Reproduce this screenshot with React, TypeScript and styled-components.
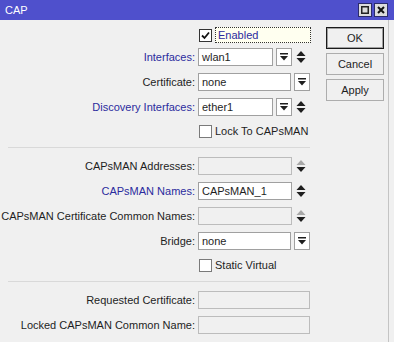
import React from 'react'
import styled, { createGlobalStyle } from 'styled-components'

const GlobalStyle = createGlobalStyle`
    html, body {
        margin: 0;
        padding: 0;
        background: #f0f0f0;
    }
    body {
        font-family: "Liberation Sans", Arial, sans-serif;
        font-size: 11px;
        color: #1e1e1e;
    }
`

const Window = styled.div`
    width: 394px;
    height: 342px;
    display: flex;
    flex-direction: column;
    background: #f0f0f0;
    overflow: hidden;
`

const TitleBar = styled.div`
    height: 20px;
    flex: none;
    display: flex;
    align-items: center;
    justify-content: space-between;
    background: #4f50cc;
    color: #ffffff;
    padding: 0 6px 0 5px;
    font-size: 11px;
`

const TitleButtons = styled.div`
    display: flex;
    gap: 2px;
`

const TitleButton = styled.div`
    width: 12px;
    height: 12px;
    border: 1px solid #2b2b6a;
    background: #dcdcdc;
    display: flex;
    align-items: center;
    justify-content: center;
`

const Body = styled.div`
    flex: 1;
    display: flex;
    align-items: flex-start;
    border-right: 1px solid #c4c4c4;
    margin-right: 5px;
`

const Form = styled.div`
    width: 310px;
    padding-top: 7px;
    display: flex;
    flex-direction: column;
`

const Section = styled.div`
    display: flex;
    flex-direction: column;
    gap: 7px;
`

const Separator = styled.div`
    height: 1px;
    background: #d9d9d9;
    margin: 8px 0 9px 8px;
`

const Row = styled.div<{ $height?: number }>`
    display: grid;
    grid-template-columns: 195px 112px;
    column-gap: 3px;
    align-items: center;
    height: ${({ $height }) => $height ?? 18}px;
`

const Label = styled.div<{ $link?: boolean }>`
    text-align: right;
    white-space: nowrap;
    color: ${({ $link }) => ($link ? '#2b2b9e' : '#1e1e1e')};
`

const Control = styled.div`
    display: flex;
    align-items: center;
    height: 18px;
`

const Input = styled.div<{ $disabled?: boolean }>`
    flex: 1;
    height: 18px;
    box-sizing: border-box;
    border: 1px solid ${({ $disabled }) => ($disabled ? '#bcbcbc' : '#a0a0a0')};
    background: ${({ $disabled }) => ($disabled ? '#f0f0f0' : '#ffffff')};
    padding: 0 3px;
    line-height: 16px;
    white-space: nowrap;
    overflow: hidden;
`

const DropButton = styled.div`
    width: 16px;
    height: 18px;
    box-sizing: border-box;
    margin-left: 3px;
    border: 1px solid #a0a0a0;
    background: #ffffff;
    display: flex;
    align-items: center;
    justify-content: center;
`

const Spinner = styled.div`
    width: 18px;
    height: 18px;
    display: flex;
    align-items: center;
    justify-content: center;
`

const CheckLine = styled.label`
    grid-column: 2 / 3;
    display: flex;
    align-items: center;
    gap: 3px;
    white-space: nowrap;
`

const Box = styled.span<{ $dark?: boolean }>`
    width: 11px;
    height: 11px;
    margin-left: 1px;
    flex: none;
    border: 1px solid ${({ $dark }) => ($dark ? '#333333' : '#7a7a7a')};
    background: #ffffff;
    display: flex;
    align-items: center;
    justify-content: center;
`

const FocusLabel = styled.span`
    flex: 1;
    border: 1px dotted #333333;
    background: #fffff0;
    color: #2b2b9e;
    padding: 0 2px;
    line-height: 14px;
    margin-right: -1px;
`

const Buttons = styled.div`
    margin-left: 16px;
    padding-top: 7px;
    display: flex;
    flex-direction: column;
    gap: 4px;
`

const Button = styled.div<{ $default?: boolean }>`
    width: 58px;
    height: 22px;
    box-sizing: border-box;
    border: 1px solid ${({ $default }) => ($default ? '#1a1a1a' : '#adadad')};
    box-shadow: ${({ $default }) => ($default ? 'inset 0 0 0 1px #a0a0a0' : 'none')};
    background: #f0f0f0;
    display: flex;
    align-items: center;
    justify-content: center;
`

const DropIcon = () => (
    <svg width="8" height="8" viewBox="0 0 8 8">
        <rect x="0" y="0" width="8" height="1.5" fill="#1e1e1e" />
        <path d="M0 3 L8 3 L4 7.5 Z" fill="#1e1e1e" />
    </svg>
)

const SpinIcon = ({ disabled }: { disabled?: boolean }) => (
    <svg width="10" height="14" viewBox="0 0 10 14">
        <path d="M0.5 6 L9.5 6 L5 1 Z" fill={disabled ? '#a8a8a8' : '#1e1e1e'} />
        <path d="M0.5 8 L9.5 8 L5 13 Z" fill="#1e1e1e" />
    </svg>
)

const Tick = () => (
    <svg width="9" height="9" viewBox="0 0 9 9">
        <path d="M1 4.5 L3.5 7 L8 1.5" stroke="#111111" strokeWidth="1.8" fill="none" />
    </svg>
)

type FieldProps = {
    label: string
    value?: string
    link?: boolean
    disabled?: boolean
    drop?: boolean
    spin?: boolean
}

const Field: React.FC<FieldProps> = ({ label, value, link, disabled, drop, spin }) => (
    <Row>
        <Label $link={link}>{label}:</Label>
        <Control>
            <Input $disabled={disabled}>{value}</Input>
            {drop && (
                <DropButton>
                    <DropIcon />
                </DropButton>
            )}
            {spin && (
                <Spinner>
                    <SpinIcon disabled={disabled} />
                </Spinner>
            )}
        </Control>
    </Row>
)

const Check: React.FC<{ label: string; checked?: boolean; focused?: boolean; height?: number }> = ({
    label,
    checked,
    focused,
    height = 16,
}) => (
    <Row $height={height}>
        <span />
        <CheckLine>
            <Box $dark={checked}>{checked && <Tick />}</Box>
            {focused ? <FocusLabel>{label}</FocusLabel> : <span>{label}</span>}
        </CheckLine>
    </Row>
)

const App: React.FC = () => {
    return (
        <>
            <GlobalStyle />
            <Window>
                <TitleBar>
                    <span>CAP</span>
                    <TitleButtons>
                        <TitleButton>
                            <svg width="8" height="8" viewBox="0 0 8 8">
                                <rect x="0.75" y="0.75" width="6.5" height="6.5" stroke="#222" strokeWidth="1.5" fill="none" />
                            </svg>
                        </TitleButton>
                        <TitleButton>
                            <svg width="8" height="8" viewBox="0 0 8 8">
                                <path d="M1 1 L7 7 M7 1 L1 7" stroke="#111" strokeWidth="2" />
                            </svg>
                        </TitleButton>
                    </TitleButtons>
                </TitleBar>
                <Body>
                    <Form>
                        <Section>
                            <Check label="Enabled" checked focused height={14} />
                            <Field label="Interfaces" value="wlan1" link drop spin />
                            <Field label="Certificate" value="none" drop />
                            <Field label="Discovery Interfaces" value="ether1" link drop spin />
                            <Check label="Lock To CAPsMAN" />
                        </Section>
                        <Separator />
                        <Section>
                            <Field label="CAPsMAN Addresses" disabled spin />
                            <Field label="CAPsMAN Names" value="CAPsMAN_1" link spin />
                            <Field label="CAPsMAN Certificate Common Names" disabled spin />
                            <Field label="Bridge" value="none" drop />
                            <Check label="Static Virtual" />
                        </Section>
                        <Separator />
                        <Section>
                            <Field label="Requested Certificate" disabled />
                            <Field label="Locked CAPsMAN Common Name" disabled />
                        </Section>
                    </Form>
                    <Buttons>
                        <Button $default>OK</Button>
                        <Button>Cancel</Button>
                        <Button>Apply</Button>
                    </Buttons>
                </Body>
            </Window>
        </>
    )
}

export default App
